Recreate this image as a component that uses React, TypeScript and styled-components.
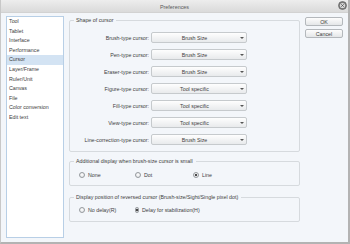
import React from "react";
import styled, { createGlobalStyle } from "styled-components";

const Global = createGlobalStyle`
  html, body { margin: 0; padding: 0; background: #f3f6fa; }
  body { width: 350px; height: 244px; overflow: hidden; font-family: "Liberation Sans", Arial, sans-serif; color: #3d3d3d; }
  * { box-sizing: border-box; }
`;

const Window = styled.div`
  width: 350px;
  height: 244px;
  display: flex;
  flex-direction: column;
  background: #f3f6fa;
  border-left: 1px solid #c8c8c8;
  border-right: 2px solid #b3b3b3;
  border-bottom: 2px solid #b3b3b3;
`;

const TitleBar = styled.div`
  height: 13px;
  flex: none;
  display: grid;
  grid-template-columns: 1fr auto 1fr;
  align-items: center;
  background: linear-gradient(#ededed, #dadada);
  border-bottom: 1px solid #d2d2d2;
`;

const Title = styled.div`
  grid-column: 2;
  font-size: 5.4px;
  color: #5a5a5a;
  padding-top: 1px;
`;

const Close = styled.div`
  grid-column: 3;
  justify-self: end;
  margin-right: 1px;
  margin-top: -1px;
  width: 9px;
  height: 9px;
  display: flex;
`;

const Body = styled.div`
  flex: 1;
  display: flex;
  padding: 3px 0 0 5px;
`;

const Sidebar = styled.div`
  width: 58px;
  height: 222px;
  background: #ffffff;
  border: 1px solid #b8cfe6;
  display: flex;
  flex-direction: column;
`;

const Item = styled.div<{ $sel?: boolean }>`
  height: 9.6px;
  line-height: 9.6px;
  font-size: 5.3px;
  padding-left: 2px;
  white-space: nowrap;
  background: ${(p) => (p.$sel ? "#d3e3f3" : "transparent")};
`;

const Main = styled.div`
  width: 231px;
  margin-left: 5px;
  display: flex;
  flex-direction: column;
`;

const Group = styled.fieldset<{ $mt: number; $pt: number; $pb: number }>`
  margin: ${(p) => p.$mt}px 0 0 0;
  padding: ${(p) => p.$pt}px 0 ${(p) => p.$pb}px 0;
  border: 1px solid #d6dade;
  border-radius: 2px;
  min-width: 0;
`;

const Legend = styled.legend`
  font-size: 5.3px;
  line-height: 8px;
  height: 8px;
  margin-left: 4px;
  padding: 0 3px 0 2px;
  white-space: nowrap;
`;

const ShapeGrid = styled.div`
  display: grid;
  grid-template-columns: 1fr 96px;
  column-gap: 2px;
  row-gap: 6px;
  padding-right: 52px;
  align-items: center;
`;

const Label = styled.div`
  font-size: 5.3px;
  text-align: right;
  white-space: nowrap;
`;

const Select = styled.div`
  height: 11px;
  border: 1px solid #c6cacd;
  border-radius: 2px;
  background: linear-gradient(#fefefe, #e8eaec);
  display: flex;
  align-items: center;
  padding-right: 9px;
  position: relative;
`;

const SelectText = styled.div`
  flex: 1;
  text-align: center;
  font-size: 5.3px;
`;

const Arrow = styled.div`
  position: absolute;
  right: 2px;
  top: 4px;
  width: 0;
  height: 0;
  border-left: 2px solid transparent;
  border-right: 2px solid transparent;
  border-top: 2.5px solid #555;
`;

const RadioRow = styled.div`
  display: grid;
  grid-template-columns: 56px 58px auto;
  padding-left: 9px;
  height: 8px;
  align-items: center;
`;

const RadioItem = styled.div`
  display: flex;
  align-items: center;
  gap: 3px;
  font-size: 5.3px;
  white-space: nowrap;
`;

const Circle = styled.div<{ $on?: boolean }>`
  width: 6px;
  height: 6px;
  border-radius: 50%;
  border: 1px solid #969a9e;
  background: radial-gradient(circle at 50% 40%, #ffffff, #dcdfe2);
  display: flex;
  align-items: center;
  justify-content: center;
  &::after {
    content: "";
    width: 2px;
    height: 2px;
    border-radius: 50%;
    background: ${(p) => (p.$on ? "#111" : "transparent")};
  }
`;

const Buttons = styled.div`
  display: flex;
  flex-direction: column;
  gap: 3px;
  margin: 1px 0 0 5px;
`;

const Button = styled.div`
  width: 38px;
  height: 9px;
  border: 1px solid #b4b8bc;
  border-radius: 2px;
  background: linear-gradient(#fdfdfd, #e4e6e8);
  font-size: 5.3px;
  display: flex;
  align-items: center;
  justify-content: center;
`;

const sidebarItems = [
  "Tool",
  "Tablet",
  "Interface",
  "Performance",
  "Cursor",
  "Layer/Frame",
  "Ruler/Unit",
  "Canvas",
  "File",
  "Color conversion",
  "Edit text",
];

const shapeRows: [string, string][] = [
  ["Brush-type cursor:", "Brush Size"],
  ["Pen-type cursor:", "Brush Size"],
  ["Eraser-type cursor:", "Brush Size"],
  ["Figure-type cursor:", "Tool specific"],
  ["Fill-type cursor:", "Tool specific"],
  ["View-type cursor:", "Tool specific"],
  ["Line-correction-type cursor:", "Brush Size"],
];

export default function App() {
  return (
    <>
      <Global />
      <Window>
        <TitleBar>
          <Title>Preferences</Title>
          <Close>
            <svg width="9" height="9" viewBox="0 0 9 9">
              <circle cx="4.5" cy="4.5" r="4" fill="#7d7d7d" stroke="#5d5d5d" strokeWidth="0.6" />
              <circle cx="4.5" cy="4.5" r="2.6" fill="#d8d8d8" />
              <path d="M3.3 3.3 L5.7 5.7 M5.7 3.3 L3.3 5.7" stroke="#555" strokeWidth="0.9" />
            </svg>
          </Close>
        </TitleBar>
        <Body>
          <Sidebar>
            {sidebarItems.map((s) => (
              <Item key={s} $sel={s === "Cursor"}>
                {s}
              </Item>
            ))}
          </Sidebar>
          <Main>
            <Group $mt={0} $pt={8} $pb={6}>
              <Legend>Shape of cursor</Legend>
              <ShapeGrid>
                {shapeRows.map(([l, v]) => (
                  <React.Fragment key={l}>
                    <Label>{l}</Label>
                    <Select>
                      <SelectText>{v}</SelectText>
                      <Arrow />
                    </Select>
                  </React.Fragment>
                ))}
              </ShapeGrid>
            </Group>
            <Group $mt={5} $pt={6} $pb={6}>
              <Legend>Additional display when brush-size cursor is small</Legend>
              <RadioRow>
                <RadioItem>
                  <Circle />
                  None
                </RadioItem>
                <RadioItem>
                  <Circle />
                  Dot
                </RadioItem>
                <RadioItem>
                  <Circle $on />
                  Line
                </RadioItem>
              </RadioRow>
            </Group>
            <Group $mt={7} $pt={5} $pb={7}>
              <Legend>Display position of reversed cursor (Brush-size/Sight/Single pixel dot)</Legend>
              <RadioRow>
                <RadioItem>
                  <Circle />
                  No delay(R)
                </RadioItem>
                <RadioItem>
                  <Circle $on />
                  Delay for stabilization(H)
                </RadioItem>
              </RadioRow>
            </Group>
          </Main>
          <Buttons>
            <Button>OK</Button>
            <Button>Cancel</Button>
          </Buttons>
        </Body>
      </Window>
    </>
  );
}
